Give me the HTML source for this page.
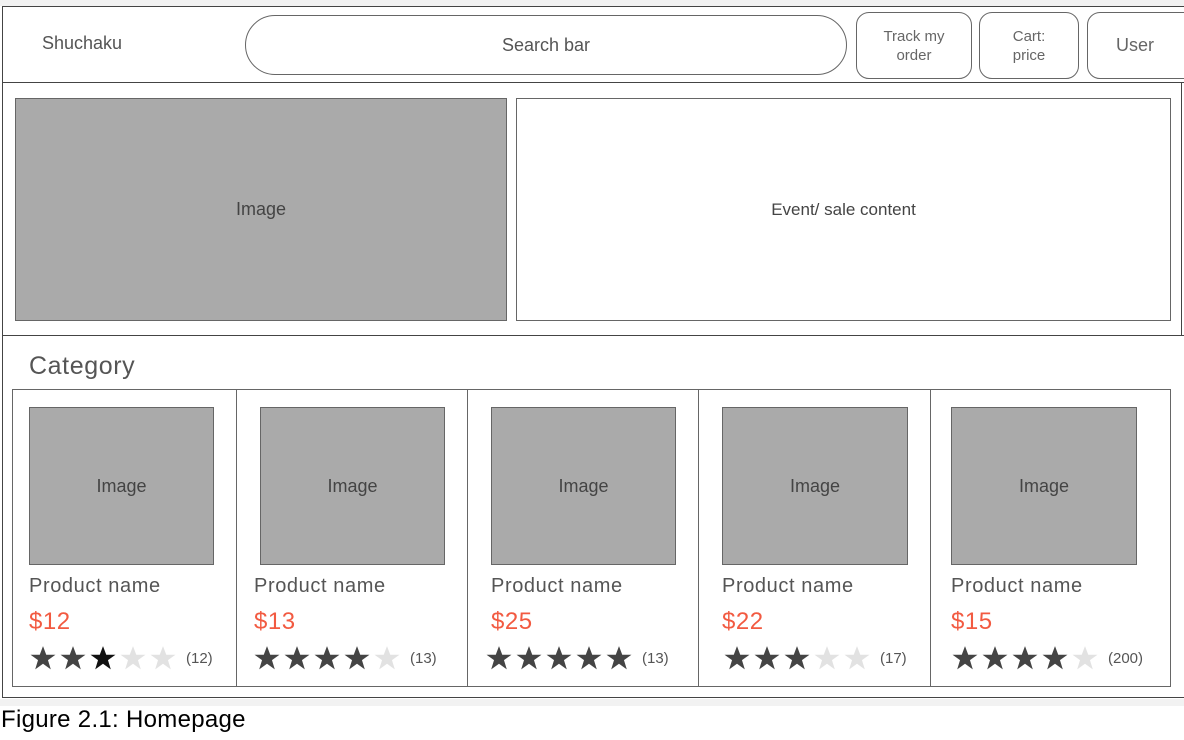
<!DOCTYPE html><html><head><style>
body{margin:0;width:1184px;height:740px;background:#fff;position:relative;overflow:hidden;font-family:"Liberation Sans",Arial,sans-serif;color:#555}
div{position:absolute;box-sizing:border-box}
.c{display:flex;align-items:center;justify-content:center;text-align:center}
.img{background:#aaa;border:1px solid #666;font-size:18px;color:#444}
.pn{font-size:20px;color:#555;letter-spacing:0.6px}
.pr{font-size:24px;color:#f25a41;letter-spacing:0.5px}
.btn{border:1px solid #666;border-radius:13px;font-size:15px;line-height:19px;color:#666;background:#fff}
.st{display:flex;align-items:center;font-size:15px;color:#555}
.st svg{width:26px;height:26px;margin-right:4px}
.st span{margin-left:6px}
</style></head><body>
<div style="left:0;top:0;width:1184px;height:6px;background:#f2f2f2"></div>
<div style="left:2px;top:6px;width:1184px;height:692px;border:1px solid #444"></div>
<div style="left:2px;top:82px;width:1182px;height:1px;background:#444"></div>
<div style="left:2px;top:335px;width:1182px;height:1px;background:#444"></div>
<div style="left:1181px;top:83px;width:1px;height:253px;background:#444"></div>
<div style="left:0;top:699px;width:1184px;height:7px;background:#f2f2f2"></div>
<div style="left:42px;top:33px;font-size:18px;color:#555">Shuchaku</div>
<div class="c" style="left:245px;top:15px;width:602px;height:60px;border:1px solid #666;border-radius:30px;font-size:18px;color:#555">Search bar</div>
<div class="btn c" style="left:856px;top:12px;width:116px;height:67px">Track my<br>order</div>
<div class="btn c" style="left:979px;top:12px;width:100px;height:67px">Cart:<br>price</div>
<div class="btn c" style="left:1087px;top:12px;width:110px;height:67px;font-size:18px;justify-content:flex-start;padding-left:28px">User</div>
<div class="img c" style="left:15px;top:98px;width:492px;height:223px">Image</div>
<div class="c" style="left:516px;top:98px;width:655px;height:223px;border:1px solid #666;font-size:17px;color:#444">Event/ sale content</div>
<div style="left:29px;top:352px;font-size:25px;color:#555;letter-spacing:0.6px">Category</div>
<div style="left:12px;top:389px;width:1159px;height:298px;border:1px solid #666"></div>
<div style="left:236px;top:389px;width:1px;height:298px;background:#666"></div>
<div style="left:467px;top:389px;width:1px;height:298px;background:#666"></div>
<div style="left:698px;top:389px;width:1px;height:298px;background:#666"></div>
<div style="left:930px;top:389px;width:1px;height:298px;background:#666"></div>
<svg width="0" height="0" style="position:absolute"><defs><polygon id="s" points="12,1 15,9 23.5,9 16.6,14 19.2,22.5 12,17.3 4.8,22.5 7.4,14 0.5,9 9,9"/></defs></svg>

<div class="img c" style="left:29px;top:407px;width:185px;height:158px">Image</div>
<div class="pn" style="left:29px;top:575px">Product name</div>
<div class="pr" style="left:29px;top:608px">$12</div>
<div class="st" style="left:30px;top:645px"><svg viewBox="0 0 24 24"><use href="#s" fill="#444"/></svg><svg viewBox="0 0 24 24"><use href="#s" fill="#444"/></svg><svg viewBox="0 0 24 24"><use href="#s" fill="#111"/></svg><svg viewBox="0 0 24 24"><use href="#s" fill="#e2e2e2"/></svg><svg viewBox="0 0 24 24"><use href="#s" fill="#e2e2e2"/></svg><span>(12)</span></div>

<div class="img c" style="left:260px;top:407px;width:185px;height:158px">Image</div>
<div class="pn" style="left:254px;top:575px">Product name</div>
<div class="pr" style="left:254px;top:608px">$13</div>
<div class="st" style="left:254px;top:645px"><svg viewBox="0 0 24 24"><use href="#s" fill="#444"/></svg><svg viewBox="0 0 24 24"><use href="#s" fill="#444"/></svg><svg viewBox="0 0 24 24"><use href="#s" fill="#444"/></svg><svg viewBox="0 0 24 24"><use href="#s" fill="#444"/></svg><svg viewBox="0 0 24 24"><use href="#s" fill="#e2e2e2"/></svg><span>(13)</span></div>

<div class="img c" style="left:491px;top:407px;width:185px;height:158px">Image</div>
<div class="pn" style="left:491px;top:575px">Product name</div>
<div class="pr" style="left:491px;top:608px">$25</div>
<div class="st" style="left:486px;top:645px"><svg viewBox="0 0 24 24"><use href="#s" fill="#444"/></svg><svg viewBox="0 0 24 24"><use href="#s" fill="#444"/></svg><svg viewBox="0 0 24 24"><use href="#s" fill="#444"/></svg><svg viewBox="0 0 24 24"><use href="#s" fill="#444"/></svg><svg viewBox="0 0 24 24"><use href="#s" fill="#444"/></svg><span>(13)</span></div>

<div class="img c" style="left:722px;top:407px;width:186px;height:158px">Image</div>
<div class="pn" style="left:722px;top:575px">Product name</div>
<div class="pr" style="left:722px;top:608px">$22</div>
<div class="st" style="left:724px;top:645px"><svg viewBox="0 0 24 24"><use href="#s" fill="#444"/></svg><svg viewBox="0 0 24 24"><use href="#s" fill="#444"/></svg><svg viewBox="0 0 24 24"><use href="#s" fill="#444"/></svg><svg viewBox="0 0 24 24"><use href="#s" fill="#e2e2e2"/></svg><svg viewBox="0 0 24 24"><use href="#s" fill="#e2e2e2"/></svg><span>(17)</span></div>

<div class="img c" style="left:951px;top:407px;width:186px;height:158px">Image</div>
<div class="pn" style="left:951px;top:575px">Product name</div>
<div class="pr" style="left:951px;top:608px">$15</div>
<div class="st" style="left:952px;top:645px"><svg viewBox="0 0 24 24"><use href="#s" fill="#444"/></svg><svg viewBox="0 0 24 24"><use href="#s" fill="#444"/></svg><svg viewBox="0 0 24 24"><use href="#s" fill="#444"/></svg><svg viewBox="0 0 24 24"><use href="#s" fill="#444"/></svg><svg viewBox="0 0 24 24"><use href="#s" fill="#e2e2e2"/></svg><span>(200)</span></div>

<div style="left:1px;top:706px;font-size:24px;color:#000;letter-spacing:0.3px">Figure 2.1: Homepage</div>
</body></html>
